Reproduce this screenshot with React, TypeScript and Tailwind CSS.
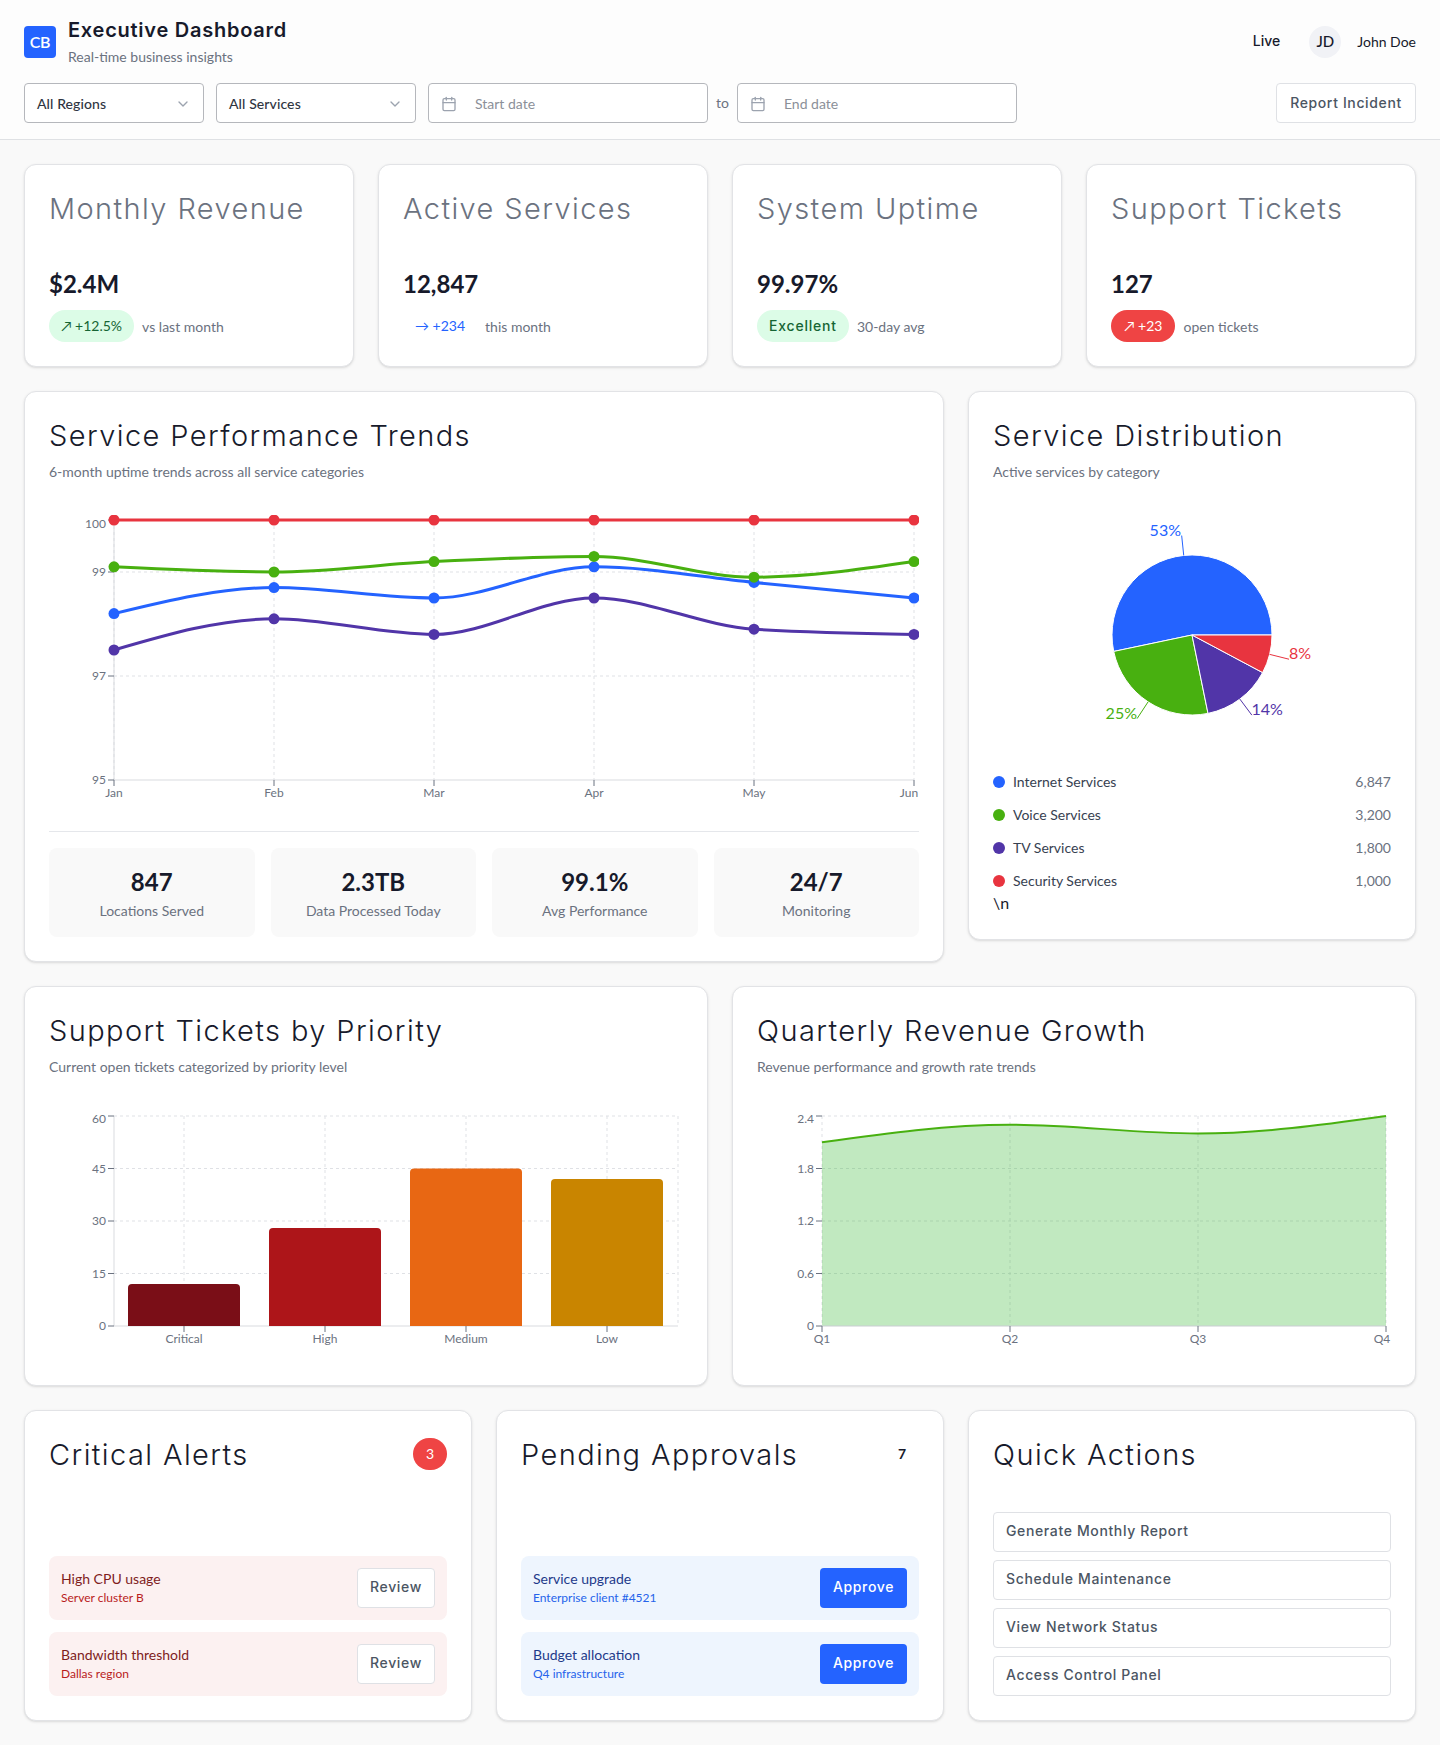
import React from 'react';
import { Calendar, ChevronDown } from 'lucide-react';

const heading = 'font-["Inter",sans-serif]';
const btnText = 'font-["Inter",sans-serif] text-sm font-medium tracking-[0.63px]';

const BLUE = '#2463ff';
const GREEN = '#48b010';
const PURPLE = '#5135a8';
const RED = '#e8343f';
const GRID = '#dfe1e5';
const AXIS = '#6b7280';

// monotone-x curve, same thing the chart lib would draw
function monotonePath(pts: [number, number][]) {
  const n = pts.length;
  const dx: number[] = [];
  const m: number[] = [];
  for (let i = 0; i < n - 1; i++) {
    dx[i] = pts[i + 1][0] - pts[i][0];
    m[i] = (pts[i + 1][1] - pts[i][1]) / dx[i];
  }
  const t: number[] = [];
  for (let i = 1; i < n - 1; i++) {
    const s0 = m[i - 1];
    const s1 = m[i];
    const p = (s0 * dx[i] + s1 * dx[i - 1]) / (dx[i - 1] + dx[i]);
    t[i] = (Math.sign(s0) + Math.sign(s1)) * Math.min(Math.abs(s0), Math.abs(s1), 0.5 * Math.abs(p)) || 0;
  }
  t[0] = (3 * m[0] - t[1]) / 2;
  t[n - 1] = (3 * m[n - 2] - t[n - 2]) / 2;
  let d = `M${pts[0][0]},${pts[0][1]}`;
  for (let i = 0; i < n - 1; i++) {
    const h = dx[i] / 3;
    d += `C${pts[i][0] + h},${pts[i][1] + h * t[i]} ${pts[i + 1][0] - h},${pts[i + 1][1] - h * t[i + 1]} ${pts[i + 1][0]},${pts[i + 1][1]}`;
  }
  return d;
}

function Card({ className = '', children }: { className?: string; children: React.ReactNode }) {
  return <div className={`bg-white border border-[#e2e3e6] rounded-xl shadow-sm p-6 ${className}`}>{children}</div>;
}

function CardTitle({ children, muted }: { children: React.ReactNode; muted?: boolean }) {
  return (
    <h3 className={`${heading} text-[29px] leading-[40px] -mb-[2px] font-light tracking-[1.4px] ${muted ? 'text-[#6b7280]' : 'text-[#171a2b]'}`}>
      {children}
    </h3>
  );
}

function KpiCard({ title, value, badge, note }: { title: string; value: string; badge: React.ReactNode; note: string }) {
  return (
    <Card>
      <CardTitle muted>{title}</CardTitle>
      <div className="mt-[41px] text-2xl leading-8 font-bold text-[#171a2b]">{value}</div>
      <div className="mt-[10px] flex items-center gap-2 h-8">
        {badge}
        <span className="text-sm text-[#6b7280] pt-px">{note}</span>
      </div>
    </Card>
  );
}

function Pill({ className, children }: { className: string; children: React.ReactNode }) {
  return <span className={`inline-flex items-center h-8 rounded-2xl text-sm ${className}`}>{children}</span>;
}

function TrendChart() {
  const xs = [65, 225, 385, 545, 705, 865];
  const months = ['Jan', 'Feb', 'Mar', 'Apr', 'May', 'Jun'];
  const y = (v: number) => 265 - (v - 95) * 52;
  const series: [string, number[]][] = [
    [PURPLE, [97.5, 98.1, 97.8, 98.5, 97.9, 97.8]],
    [BLUE, [98.2, 98.7, 98.5, 99.1, 98.8, 98.5]],
    [GREEN, [99.1, 99.0, 99.2, 99.3, 98.9, 99.2]],
    [RED, [100, 100, 100, 100, 100, 100]],
  ];
  return (
    <svg width="870" height="300" className="block mt-[33px]" fontFamily="Lato, sans-serif" fontSize="12" fill={AXIS}>
      <g stroke={GRID} strokeDasharray="3 3">
        {[99, 97].map((v) => <line key={v} x1="65" x2="865" y1={y(v)} y2={y(v)} />)}
        <line x1="65" x2="865" y1="5" y2="5" />
        {xs.map((x) => <line key={x} x1={x} x2={x} y1="5" y2="265" />)}
      </g>
      <line x1="65" x2="865" y1="265" y2="265" stroke="#d9dbdf" />
      <line x1="65" x2="65" y1="5" y2="265" stroke="#d9dbdf" />
      <g stroke={AXIS}>
        {[100, 99, 97, 95].map((v) => <line key={v} x1="59" x2="65" y1={y(v)} y2={y(v)} />)}
        {xs.map((x) => <line key={x} x1={x} x2={x} y1="265" y2="271" />)}
      </g>
      <text x="57" y="13" textAnchor="end">100</text>
      <text x="57" y="61" textAnchor="end">99</text>
      <text x="57" y="165" textAnchor="end">97</text>
      <text x="57" y="269" textAnchor="end">95</text>
      {months.map((m, i) => (
        <text key={m} x={i === 5 ? xs[i] - 5 : xs[i]} y="282" textAnchor="middle">{m}</text>
      ))}
      {series.map(([color, vals]) => (
        <g key={color}>
          <path d={monotonePath(vals.map((v, i) => [xs[i], y(v)]))} fill="none" stroke={color} strokeWidth="3" />
          {vals.map((v, i) => <circle key={i} cx={xs[i]} cy={y(v)} r="5.5" fill={color} />)}
        </g>
      ))}
    </svg>
  );
}

function PieChart() {
  const cx = 199;
  const cy = 120;
  const r = 80;
  const data = [
    { v: 6847, color: BLUE, label: '53%', lx: 188, ly: 21, anchor: 'end' },
    { v: 3200, color: GREEN, label: '25%', lx: 144, ly: 204, anchor: 'end' },
    { v: 1800, color: PURPLE, label: '14%', lx: 258.5, ly: 200, anchor: 'start' },
    { v: 1000, color: RED, label: '8%', lx: 296, ly: 144, anchor: 'start' },
  ];
  const total = data.reduce((s, d) => s + d.v, 0);
  const pt = (deg: number, rad: number): [number, number] => [
    cx + rad * Math.cos((deg * Math.PI) / 180),
    cy - rad * Math.sin((deg * Math.PI) / 180),
  ];
  let start = 0;
  return (
    <svg width="397" height="240" className="block mt-[33px] mb-[17px]" fontFamily="Lato, sans-serif" fontSize="16">
      {data.map((d) => {
        const sweep = (d.v / total) * 360;
        const end = start + sweep;
        const mid = start + sweep / 2;
        const [x0, y0] = pt(start, r);
        const [x1, y1] = pt(end, r);
        const [l0x, l0y] = pt(mid, r);
        const [l1x, l1y] = pt(mid, r + 20);
        start = end;
        return (
          <g key={d.label}>
            <path d={`M${cx},${cy}L${x0},${y0}A${r},${r} 0 ${sweep > 180 ? 1 : 0} 0 ${x1},${y1}Z`} fill={d.color} stroke="#fff" />
            <path d={`M${l0x},${l0y}L${l1x},${l1y}`} stroke={d.color} fill="none" />
            <text x={d.lx} y={d.ly} textAnchor={d.anchor as 'start' | 'end'} fill={d.color}>{d.label}</text>
          </g>
        );
      })}
    </svg>
  );
}

function BarChart() {
  const bars = [
    { name: 'Critical', v: 12, x: 79, color: '#7a0e17' },
    { name: 'High', v: 28, x: 220, color: '#ad1519' },
    { name: 'Medium', v: 45, x: 361, color: '#e86713' },
    { name: 'Low', v: 42, x: 502, color: '#c98500' },
  ];
  const base = 216;
  return (
    <svg width="634" height="251" className="block mt-[33px]" fontFamily="Lato, sans-serif" fontSize="12" fill={AXIS}>
      <g stroke={GRID} strokeDasharray="3 3">
        {[6, 58.5, 111, 163.5].map((y) => <line key={y} x1="65" x2="629" y1={y} y2={y} />)}
        {[135, 276, 417, 558, 629].map((x) => <line key={x} x1={x} x2={x} y1="6" y2={base} />)}
      </g>
      <line x1="65" x2="629" y1={base} y2={base} stroke="#d9dbdf" />
      <line x1="65" x2="65" y1="6" y2={base} stroke="#d9dbdf" />
      <g stroke={AXIS}>
        {[6, 58.5, 111, 163.5, 216].map((y) => <line key={y} x1="59" x2="65" y1={y} y2={y} />)}
        {[135, 276, 417, 558].map((x) => <line key={x} x1={x} x2={x} y1={base} y2={base + 6} />)}
      </g>
      {[['60', 13], ['45', 63], ['30', 115], ['15', 168], ['0', 220]].map(([t, y]) => (
        <text key={t} x="57" y={y} textAnchor="end">{t}</text>
      ))}
      {bars.map((b) => {
        const h = b.v * 3.5;
        const top = base - h;
        return (
          <g key={b.name}>
            <path d={`M${b.x},${base}V${top + 4}Q${b.x},${top} ${b.x + 4},${top}H${b.x + 108}Q${b.x + 112},${top} ${b.x + 112},${top + 4}V${base}Z`} fill={b.color} />
            <text x={b.x + 56} y={base + 17} textAnchor="middle">{b.name}</text>
          </g>
        );
      })}
    </svg>
  );
}

function AreaChart() {
  const xs = [65, 253, 441, 629];
  const vals = [2.1, 2.3, 2.2, 2.4];
  const base = 216;
  const y = (v: number) => base - v * 87.5;
  const line = monotonePath(vals.map((v, i) => [xs[i], y(v)]));
  return (
    <svg width="634" height="251" className="block mt-[33px]" fontFamily="Lato, sans-serif" fontSize="12" fill={AXIS}>
      <g stroke={GRID} strokeDasharray="3 3">
        {[6, 58.5, 111, 163.5].map((v) => <line key={v} x1="65" x2="629" y1={v} y2={v} />)}
        {xs.map((x) => <line key={x} x1={x} x2={x} y1="6" y2={base} />)}
      </g>
      <path d={`${line}L629,${base}L65,${base}Z`} fill="#33b52f" fillOpacity="0.3" />
      <path d={line} fill="none" stroke={GREEN} strokeWidth="2" />
      <line x1="65" x2="629" y1={base} y2={base} stroke="#c9cdd2" />
      <g stroke={AXIS}>
        {[6, 58.5, 111, 163.5, 216].map((v) => <line key={v} x1="59" x2="65" y1={v} y2={v} />)}
        {xs.map((x) => <line key={x} x1={x} x2={x} y1={base} y2={base + 6} />)}
      </g>
      {[['2.4', 13], ['1.8', 63], ['1.2', 115], ['0.6', 168], ['0', 220]].map(([t, v]) => (
        <text key={t} x="57" y={v} textAnchor="end">{t}</text>
      ))}
      {['Q1', 'Q2', 'Q3', 'Q4'].map((q, i) => (
        <text key={q} x={i === 3 ? xs[i] - 4 : xs[i]} y={base + 17} textAnchor="middle">{q}</text>
      ))}
    </svg>
  );
}

function AlertRow({ title, sub, tone }: { title: string; sub: string; tone: 'red' | 'blue' }) {
  const red = tone === 'red';
  return (
    <div className={`flex items-center justify-between h-16 px-3 rounded-lg ${red ? 'bg-[#fcf1f1]' : 'bg-[#eef5fe]'}`}>
      <div className="pb-[2px]">
        <div className={`text-sm leading-5 ${red ? 'text-[#7f1d1d]' : 'text-[#1e3a8a]'}`}>{title}</div>
        <div className={`mt-px text-xs leading-4 ${red ? 'text-[#b91c1c]' : 'text-[#2563eb]'}`}>{sub}</div>
      </div>
      {red ? (
        <button className={`${btnText} pb-[2px] h-10 w-[78px] bg-white border border-[#dfe1e5] rounded text-[#4b5563]`}>Review</button>
      ) : (
        <button className={`${btnText} pb-[2px] h-10 w-[87px] bg-[#2463ff] rounded text-white`}>Approve</button>
      )}
    </div>
  );
}

export default function App() {
  const legend = [
    { name: 'Internet Services', value: '6,847', color: 'bg-[#2463ff]' },
    { name: 'Voice Services', value: '3,200', color: 'bg-[#48b010]' },
    { name: 'TV Services', value: '1,800', color: 'bg-[#5135a8]' },
    { name: 'Security Services', value: '1,000', color: 'bg-[#e8343f]' },
  ];
  const stats = [
    ['847', 'Locations Served'],
    ['2.3TB', 'Data Processed Today'],
    ['99.1%', 'Avg Performance'],
    ['24/7', 'Monitoring'],
  ];

  return (
    <div className='min-h-screen bg-[#f9f9f9] font-["Lato",sans-serif] text-[#171a2b]'>
      <header className="bg-[#fdfdfd] border-b border-[#dfe1e4] px-6 py-4">
        <div className="flex items-center justify-between h-[51px] mb-4">
          <div className="flex items-center gap-3">
            <div className="w-8 h-8 rounded bg-[#2463ff] text-white text-base font-semibold tracking-tight flex items-center justify-center">CB</div>
            <div>
              <h1 className={`${heading} text-xl leading-7 font-semibold tracking-[0.75px] text-[#171a2b]`}>Executive Dashboard</h1>
              <p className="text-sm leading-5 mt-[3px] text-[#6b7280]">Real-time business insights</p>
            </div>
          </div>
          <div className="flex items-center">
            <span className={`${heading} text-sm font-medium mr-[29px] pb-px`}>Live</span>
            <span className="w-8 h-8 rounded-full bg-[#f1f2f6] text-[15px] font-medium flex items-center justify-center mr-4">JD</span>
            <span className="text-sm">John Doe</span>
          </div>
        </div>
        <div className="flex items-center h-10">
          <div className="w-[180px] h-10 px-3 pt-px flex items-center justify-between bg-white border border-[#b5b7bc] rounded text-sm font-medium tracking-[0.1px] text-[#2f3542]">
            All Regions
            <ChevronDown size={16} className="text-[#9ca3af]" />
          </div>
          <div className="ml-3 w-[200px] h-10 px-3 pt-px flex items-center justify-between bg-white border border-[#b5b7bc] rounded text-sm font-medium tracking-[0.1px] text-[#2f3542]">
            All Services
            <ChevronDown size={16} className="text-[#9ca3af]" />
          </div>
          <div className="ml-3 w-[280px] h-10 px-3 pt-px flex items-center gap-[18px] bg-white border border-[#b5b7bc] rounded text-sm text-[#8b9099]">
            <Calendar size={16} className="text-[#9ca3af]" />
            Start date
          </div>
          <span className="mx-2 text-sm text-[#6b7280]">to</span>
          <div className="w-[280px] h-10 px-3 pt-px flex items-center gap-[18px] bg-white border border-[#b5b7bc] rounded text-sm text-[#8b9099]">
            <Calendar size={16} className="text-[#9ca3af]" />
            End date
          </div>
          <button className={`${btnText} ml-auto w-[140px] h-10 bg-white border border-[#dfe1e5] rounded text-[#4b5563]`}>Report Incident</button>
        </div>
      </header>

      <main className="p-6 flex flex-col gap-6">
        <div className="grid grid-cols-4 gap-6">
          <KpiCard
            title="Monthly Revenue"
            value="$2.4M"
            note="vs last month"
            badge={<Pill className="px-3 bg-[#dcfce7] text-[#166534]">↗ +12.5%</Pill>}
          />
          <KpiCard
            title="Active Services"
            value="12,847"
            note="this month"
            badge={<Pill className="px-3 text-[#2463ff]">→ +234</Pill>}
          />
          <KpiCard
            title="System Uptime"
            value="99.97%"
            note="30-day avg"
            badge={<Pill className={`${heading} px-3 font-medium tracking-[0.8px] bg-[#dcfce7] text-[#166534]`}>Excellent</Pill>}
          />
          <KpiCard
            title="Support Tickets"
            value="127"
            note="open tickets"
            badge={<Pill className="px-[13px] bg-[#ef4444] text-white">↗ +23</Pill>}
          />
        </div>

        <div className="grid grid-cols-3 gap-6 items-start">
          <Card className="col-span-2">
            <CardTitle>Service Performance Trends</CardTitle>
            <p className="mt-2 text-sm leading-5 text-[#6b7280]">6-month uptime trends across all service categories</p>
            <TrendChart />
            <div className="mt-4 pt-4 border-t border-[#e5e7eb] grid grid-cols-4 gap-4">
              {stats.map(([value, label]) => (
                <div key={label} className="bg-[#f9f9f9] rounded-lg text-center pt-[18px] pb-4">
                  <div className="text-2xl leading-8 font-bold">{value}</div>
                  <div className="mt-[3px] text-sm leading-5 text-[#6b7280]">{label}</div>
                </div>
              ))}
            </div>
          </Card>

          <Card>
            <CardTitle>Service Distribution</CardTitle>
            <p className="mt-2 text-sm leading-5 text-[#6b7280]">Active services by category</p>
            <PieChart />
            <div className="flex flex-col gap-[13px]">
              {legend.map((item) => (
                <div key={item.name} className="flex items-center justify-between text-sm leading-5">
                  <div className="flex items-center gap-2">
                    <span className={`w-3 h-3 rounded-full ${item.color}`} />
                    <span className="text-[#374151]">{item.name}</span>
                  </div>
                  <span className="text-[#6b7280]">{item.value}</span>
                </div>
              ))}
            </div>
            <div className="leading-6">\n</div>
          </Card>
        </div>

        <div className="grid grid-cols-2 gap-6">
          <Card>
            <CardTitle>Support Tickets by Priority</CardTitle>
            <p className="mt-2 text-sm leading-5 text-[#6b7280]">Current open tickets categorized by priority level</p>
            <BarChart />
          </Card>
          <Card>
            <CardTitle>Quarterly Revenue Growth</CardTitle>
            <p className="mt-2 text-sm leading-5 text-[#6b7280]">Revenue performance and growth rate trends</p>
            <AreaChart />
          </Card>
        </div>

        <div className="grid grid-cols-3 gap-6">
          <Card>
            <div className="flex items-center justify-between h-[38px]">
              <CardTitle>Critical Alerts</CardTitle>
              <span className="w-[34px] h-8 rounded-full bg-[#ef4444] text-white text-sm flex items-center justify-center">3</span>
            </div>
            <div className="mt-[83px] flex flex-col gap-3">
              <AlertRow tone="red" title="High CPU usage" sub="Server cluster B" />
              <AlertRow tone="red" title="Bandwidth threshold" sub="Dallas region" />
            </div>
          </Card>
          <Card>
            <div className="flex items-center justify-between h-[38px]">
              <CardTitle>Pending Approvals</CardTitle>
              <span className="w-[34px] h-8 text-sm font-bold flex items-center justify-center">7</span>
            </div>
            <div className="mt-[83px] flex flex-col gap-3">
              <AlertRow tone="blue" title="Service upgrade" sub="Enterprise client #4521" />
              <AlertRow tone="blue" title="Budget allocation" sub="Q4 infrastructure" />
            </div>
          </Card>
          <Card>
            <CardTitle>Quick Actions</CardTitle>
            <div className="mt-[39px] flex flex-col gap-2">
              {['Generate Monthly Report', 'Schedule Maintenance', 'View Network Status', 'Access Control Panel'].map((label) => (
                <button key={label} className={`${btnText} pb-[2px] h-10 px-3 text-left bg-white border border-[#dfe1e5] rounded text-[#4b5563]`}>{label}</button>
              ))}
            </div>
          </Card>
        </div>
      </main>
    </div>
  );
}
